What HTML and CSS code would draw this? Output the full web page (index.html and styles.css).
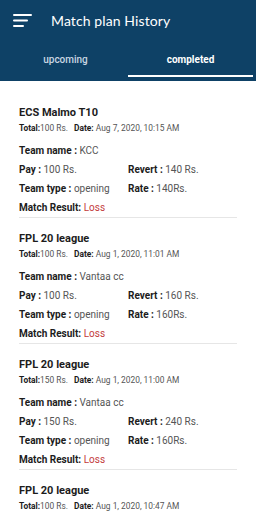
FILE: index.html
```html
<!DOCTYPE html>
<html lang="en">

<head>
  <meta charset="UTF-8">
  <meta name="viewport" content="width=device-width, initial-scale=1.0">
  <title>Match plan History</title>
  <link rel="stylesheet" href="styles.css">
</head>

<body>
  <div class="header">
    <div class="top-bar">
      <span class="menu">
        <svg width="20" height="14" viewBox="0 0 20 14">
          <rect x="0" y="0" width="19" height="2" rx="1" fill="#fff" />
          <rect x="0" y="5.5" width="15" height="2" rx="1" fill="#fff" />
          <rect x="0" y="11" width="11" height="2" rx="1" fill="#fff" />
        </svg>
      </span>
      <h1>Match plan History</h1>
    </div>
    <div class="tabs">
      <div class="tab">upcoming</div>
      <div class="tab active">completed</div>
    </div>
  </div>

  <div class="history">
    <div class="card">
      <h4>ECS Malmo T10</h4>
      <p class="meta"><b>Total:</b>100 Rs. <b class="date">Date:</b> Aug 7, 2020, 10:15 AM</p>
      <div class="rows">
        <div class="row full"><b>Team name :</b> KCC</div>
        <div class="row"><b>Pay :</b> 100 Rs.</div>
        <div class="row"><b>Revert :</b> 140 Rs.</div>
        <div class="row"><b>Team type :</b> opening</div>
        <div class="row"><b>Rate :</b> 140Rs.</div>
        <div class="row full"><b>Match Result:</b> <span class="loss">Loss</span></div>
      </div>
    </div>

    <div class="card">
      <h4>FPL 20 league</h4>
      <p class="meta"><b>Total:</b>100 Rs. <b class="date">Date:</b> Aug 1, 2020, 11:01 AM</p>
      <div class="rows">
        <div class="row full"><b>Team name :</b> Vantaa cc</div>
        <div class="row"><b>Pay :</b> 100 Rs.</div>
        <div class="row"><b>Revert :</b> 160 Rs.</div>
        <div class="row"><b>Team type :</b> opening</div>
        <div class="row"><b>Rate :</b> 160Rs.</div>
        <div class="row full"><b>Match Result:</b> <span class="loss">Loss</span></div>
      </div>
    </div>

    <div class="card">
      <h4>FPL 20 league</h4>
      <p class="meta"><b>Total:</b>150 Rs. <b class="date">Date:</b> Aug 1, 2020, 11:00 AM</p>
      <div class="rows">
        <div class="row full"><b>Team name :</b> Vantaa cc</div>
        <div class="row"><b>Pay :</b> 150 Rs.</div>
        <div class="row"><b>Revert :</b> 240 Rs.</div>
        <div class="row"><b>Team type :</b> opening</div>
        <div class="row"><b>Rate :</b> 160Rs.</div>
        <div class="row full"><b>Match Result:</b> <span class="loss">Loss</span></div>
      </div>
    </div>

    <div class="card last">
      <h4>FPL 20 league</h4>
      <p class="meta"><b>Total:</b>100 Rs. <b class="date">Date:</b> Aug 1, 2020, 10:47 AM</p>
    </div>
  </div>
</body>

</html>
```

FILE: styles.css
```css
* {
  box-sizing: border-box;
  margin: 0;
  padding: 0;
}

body {
  width: 256px;
  height: 512px;
  overflow: hidden;
  background: #fff;
  font-family: Roboto, 'Liberation Sans', sans-serif;
}

.header {
  background: #0e4166;
  height: 81px;
  padding: 0 3px 4.5px;
}

.top-bar {
  height: 40px;
  display: flex;
  align-items: center;
}

.top-bar .menu {
  display: flex;
  margin-left: 10px;
  margin-right: 18px;
  margin-top: 1px;
}

.top-bar h1 {
  color: #fff;
  font-family: Lato, 'Open Sans', sans-serif;
  font-weight: 400;
  font-size: 14px;
  letter-spacing: 0.1px;
}

.tabs {
  display: flex;
}

.tab {
  flex: 1;
  text-align: center;
  padding: 13px 0 7.5px;
  line-height: 14px;
  font-size: 10px;
  font-weight: 500;
  color: #c9d6e2;
  border-bottom: 2px solid transparent;
}

.tab.active {
  color: #fff;
  font-weight: 700;
  border-bottom-color: #fff;
}

.history {
  padding: 23.7px 19px 0;
}

.card {
  border-bottom: 1px solid #e6e6e6;
  margin-bottom: 12.5px;
}

.card.last {
  border-bottom: none;
}

.card h4 {
  font-size: 11px;
  line-height: 16px;
  font-weight: 700;
  color: #1c1c1c;
}

.card .meta {
  font-size: 8.4px;
  line-height: 14px;
  color: #555;
  margin-bottom: 6.5px;
  white-space: nowrap;
}

.card.last .meta {
  margin-bottom: 0;
}

.card .meta b {
  color: #1c1c1c;
  font-weight: 700;
}

.card .meta .date {
  margin-left: 4px;
}

.rows {
  display: grid;
  grid-template-columns: 109px 1fr;
}

.row {
  font-size: 10px;
  line-height: 19px;
  color: #555;
  white-space: nowrap;
}

.row.full {
  grid-column: 1 / 3;
}

.row b {
  color: #1c1c1c;
  font-weight: 700;
}

.loss {
  color: #c33b3b;
}
```
